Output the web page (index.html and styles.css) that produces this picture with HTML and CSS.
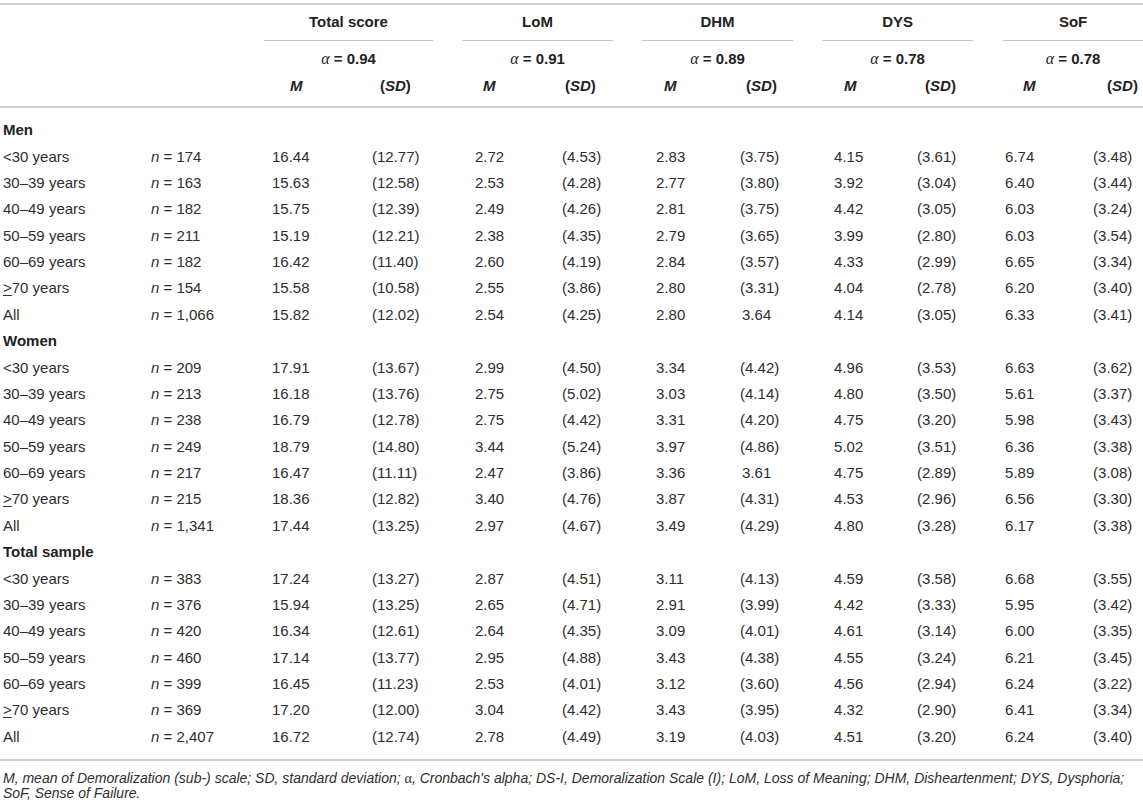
FILE: index.html
```html
<!DOCTYPE html>
<html lang="en">
<head>
<meta charset="utf-8">
<title>Demoralization Scale table</title>
<link rel="stylesheet" href="styles.css">
</head>
<body>
<div class="wrap">
<table class="stats">
  <colgroup>
    <col class="c-label"><col class="c-n">
    <col class="c-totm"><col class="c-totsd">
    <col class="c-lomm"><col class="c-lomsd">
    <col class="c-dhmm"><col class="c-dhmsd">
    <col class="c-dysm"><col class="c-dyssd">
    <col class="c-sofm"><col class="c-sofsd">
  </colgroup>
  <thead>
    <tr class="h-group">
      <th colspan="2"></th>
      <th colspan="2"><div class="grp">Total score</div></th>
      <th colspan="2"><div class="grp">LoM</div></th>
      <th colspan="2"><div class="grp">DHM</div></th>
      <th colspan="2"><div class="grp">DYS</div></th>
      <th colspan="2"><div class="grp">SoF</div></th>
    </tr>
    <tr class="h-alpha">
      <th colspan="2"></th>
      <th colspan="2"><div class="grp"><span class="al">α</span> = 0.94</div></th>
      <th colspan="2"><div class="grp"><span class="al">α</span> = 0.91</div></th>
      <th colspan="2"><div class="grp"><span class="al">α</span> = 0.89</div></th>
      <th colspan="2"><div class="grp"><span class="al">α</span> = 0.78</div></th>
      <th colspan="2"><div class="grp"><span class="al">α</span> = 0.78</div></th>
    </tr>
    <tr class="h-ms">
      <th></th><th></th>
      <th><i>M</i></th><th>(<i>SD</i>)</th>
      <th><i>M</i></th><th>(<i>SD</i>)</th>
      <th><i>M</i></th><th>(<i>SD</i>)</th>
      <th><i>M</i></th><th>(<i>SD</i>)</th>
      <th><i>M</i></th><th>(<i>SD</i>)</th>
    </tr>
  </thead>
  <tbody>
    <tr class="sec first"><td colspan="12">Men</td></tr>
    <tr><td>&lt;30 years</td><td><i>n</i> = 174</td><td>16.44</td><td>(12.77)</td><td>2.72</td><td>(4.53)</td><td>2.83</td><td>(3.75)</td><td>4.15</td><td>(3.61)</td><td>6.74</td><td>(3.48)</td></tr>
    <tr><td>30–39 years</td><td><i>n</i> = 163</td><td>15.63</td><td>(12.58)</td><td>2.53</td><td>(4.28)</td><td>2.77</td><td>(3.80)</td><td>3.92</td><td>(3.04)</td><td>6.40</td><td>(3.44)</td></tr>
    <tr><td>40–49 years</td><td><i>n</i> = 182</td><td>15.75</td><td>(12.39)</td><td>2.49</td><td>(4.26)</td><td>2.81</td><td>(3.75)</td><td>4.42</td><td>(3.05)</td><td>6.03</td><td>(3.24)</td></tr>
    <tr><td>50–59 years</td><td><i>n</i> = 211</td><td>15.19</td><td>(12.21)</td><td>2.38</td><td>(4.35)</td><td>2.79</td><td>(3.65)</td><td>3.99</td><td>(2.80)</td><td>6.03</td><td>(3.54)</td></tr>
    <tr><td>60–69 years</td><td><i>n</i> = 182</td><td>16.42</td><td>(11.40)</td><td>2.60</td><td>(4.19)</td><td>2.84</td><td>(3.57)</td><td>4.33</td><td>(2.99)</td><td>6.65</td><td>(3.34)</td></tr>
    <tr><td><u>&gt;</u>70 years</td><td><i>n</i> = 154</td><td>15.58</td><td>(10.58)</td><td>2.55</td><td>(3.86)</td><td>2.80</td><td>(3.31)</td><td>4.04</td><td>(2.78)</td><td>6.20</td><td>(3.40)</td></tr>
    <tr><td>All</td><td><i>n</i> = 1,066</td><td>15.82</td><td>(12.02)</td><td>2.54</td><td>(4.25)</td><td>2.80</td><td class="nop">3.64</td><td>4.14</td><td>(3.05)</td><td>6.33</td><td>(3.41)</td></tr>
    <tr class="sec"><td colspan="12">Women</td></tr>
    <tr><td>&lt;30 years</td><td><i>n</i> = 209</td><td>17.91</td><td>(13.67)</td><td>2.99</td><td>(4.50)</td><td>3.34</td><td>(4.42)</td><td>4.96</td><td>(3.53)</td><td>6.63</td><td>(3.62)</td></tr>
    <tr><td>30–39 years</td><td><i>n</i> = 213</td><td>16.18</td><td>(13.76)</td><td>2.75</td><td>(5.02)</td><td>3.03</td><td>(4.14)</td><td>4.80</td><td>(3.50)</td><td>5.61</td><td>(3.37)</td></tr>
    <tr><td>40–49 years</td><td><i>n</i> = 238</td><td>16.79</td><td>(12.78)</td><td>2.75</td><td>(4.42)</td><td>3.31</td><td>(4.20)</td><td>4.75</td><td>(3.20)</td><td>5.98</td><td>(3.43)</td></tr>
    <tr><td>50–59 years</td><td><i>n</i> = 249</td><td>18.79</td><td>(14.80)</td><td>3.44</td><td>(5.24)</td><td>3.97</td><td>(4.86)</td><td>5.02</td><td>(3.51)</td><td>6.36</td><td>(3.38)</td></tr>
    <tr><td>60–69 years</td><td><i>n</i> = 217</td><td>16.47</td><td>(11.11)</td><td>2.47</td><td>(3.86)</td><td>3.36</td><td class="nop">3.61</td><td>4.75</td><td>(2.89)</td><td>5.89</td><td>(3.08)</td></tr>
    <tr><td><u>&gt;</u>70 years</td><td><i>n</i> = 215</td><td>18.36</td><td>(12.82)</td><td>3.40</td><td>(4.76)</td><td>3.87</td><td>(4.31)</td><td>4.53</td><td>(2.96)</td><td>6.56</td><td>(3.30)</td></tr>
    <tr><td>All</td><td><i>n</i> = 1,341</td><td>17.44</td><td>(13.25)</td><td>2.97</td><td>(4.67)</td><td>3.49</td><td>(4.29)</td><td>4.80</td><td>(3.28)</td><td>6.17</td><td>(3.38)</td></tr>
    <tr class="sec"><td colspan="12">Total sample</td></tr>
    <tr><td>&lt;30 years</td><td><i>n</i> = 383</td><td>17.24</td><td>(13.27)</td><td>2.87</td><td>(4.51)</td><td>3.11</td><td>(4.13)</td><td>4.59</td><td>(3.58)</td><td>6.68</td><td>(3.55)</td></tr>
    <tr><td>30–39 years</td><td><i>n</i> = 376</td><td>15.94</td><td>(13.25)</td><td>2.65</td><td>(4.71)</td><td>2.91</td><td>(3.99)</td><td>4.42</td><td>(3.33)</td><td>5.95</td><td>(3.42)</td></tr>
    <tr><td>40–49 years</td><td><i>n</i> = 420</td><td>16.34</td><td>(12.61)</td><td>2.64</td><td>(4.35)</td><td>3.09</td><td>(4.01)</td><td>4.61</td><td>(3.14)</td><td>6.00</td><td>(3.35)</td></tr>
    <tr><td>50–59 years</td><td><i>n</i> = 460</td><td>17.14</td><td>(13.77)</td><td>2.95</td><td>(4.88)</td><td>3.43</td><td>(4.38)</td><td>4.55</td><td>(3.24)</td><td>6.21</td><td>(3.45)</td></tr>
    <tr><td>60–69 years</td><td><i>n</i> = 399</td><td>16.45</td><td>(11.23)</td><td>2.53</td><td>(4.01)</td><td>3.12</td><td>(3.60)</td><td>4.56</td><td>(2.94)</td><td>6.24</td><td>(3.22)</td></tr>
    <tr><td><u>&gt;</u>70 years</td><td><i>n</i> = 369</td><td>17.20</td><td>(12.00)</td><td>3.04</td><td>(4.42)</td><td>3.43</td><td>(3.95)</td><td>4.32</td><td>(2.90)</td><td>6.41</td><td>(3.34)</td></tr>
    <tr class="last"><td>All</td><td><i>n</i> = 2,407</td><td>16.72</td><td>(12.74)</td><td>2.78</td><td>(4.49)</td><td>3.19</td><td>(4.03)</td><td>4.51</td><td>(3.20)</td><td>6.24</td><td>(3.40)</td></tr>
  </tbody>
</table>
<p class="note"><i>M</i>, mean of Demoralization (sub-) scale; <i>SD</i>, standard deviation; <span class="al-note">α</span>, Cronbach's alpha; <i>DS-I</i>, Demoralization Scale (I); <i>LoM</i>, Loss of Meaning; <i>DHM</i>, Disheartenment; <i>DYS</i>, Dysphoria; <i>SoF</i>, Sense of Failure.</p>
</div>
</body>
</html>
```
FILE: styles.css
```css
html, body {
  margin: 0;
  padding: 0;
  background: #ffffff;
}

body {
  font-family: "Liberation Sans", Arial, sans-serif;
  color: #2e2e2e;
  width: 1143px;
  overflow: hidden;
}

.wrap {
  padding-top: 3px;
}

.stats {
  width: 1143px;
  table-layout: fixed;
  border-collapse: collapse;
  border-spacing: 0;
  border-top: 2px solid #cfcfcf;
  border-bottom: 2px solid #cfcfcf;
  font-size: 15px;
}

.c-label { width: 141px; }
.c-n { width: 121px; }
.c-totm { width: 100px; }
.c-totsd { width: 103px; }
.c-lomm { width: 87px; }
.c-lomsd { width: 94px; }
.c-dhmm { width: 84px; }
.c-dhmsd { width: 94px; }
.c-dysm { width: 83px; }
.c-dyssd { width: 88px; }
.c-sofm { width: 88px; }
.c-sofsd { width: 60px; }

.stats th {
  font-weight: bold;
  color: #222;
  line-height: 18px;
  padding: 0;
  text-align: center;
  white-space: nowrap;
}

.grp {
  text-align: center;
}

.h-group .grp {
  padding: 8px 0 9px;
  border-bottom: 1px solid #c4c4c4;
}

.h-group th:nth-child(2) .grp { margin: 0 32px 0 2px; }
.h-group th:nth-child(3) .grp { margin: 0 33px 0 -3px; }
.h-group th:nth-child(4) .grp { margin: 0 31px 0 -4px; }
.h-group th:nth-child(5) .grp { margin: 0 22px 0 -2px; }
.h-group th:nth-child(6) .grp { margin: 0 0 0 8px; }

.h-alpha .grp {
  padding: 9px 0 0;
}

.h-alpha th:nth-child(2) .grp { margin: 0 32px 0 2px; }
.h-alpha th:nth-child(3) .grp { margin: 0 33px 0 -3px; }
.h-alpha th:nth-child(4) .grp { margin: 0 31px 0 -4px; }
.h-alpha th:nth-child(5) .grp { margin: 0 22px 0 -2px; }
.h-alpha th:nth-child(6) .grp { margin: 0 0 0 8px; }

.al {
  font-family: "Liberation Serif", "Times New Roman", serif;
  font-style: italic;
  font-weight: normal;
  font-size: 16px;
}

.h-ms th {
  text-align: left;
  padding-top: 9px;
  padding-bottom: 11px;
  border-bottom: 2px solid #cfcfcf;
}

.h-ms th:nth-child(3) { padding-left: 28px; }
.h-ms th:nth-child(4) { padding-left: 18px; }
.h-ms th:nth-child(5) { padding-left: 18px; }
.h-ms th:nth-child(6) { padding-left: 13px; }
.h-ms th:nth-child(7) { padding-left: 18px; }
.h-ms th:nth-child(8) { padding-left: 16px; }
.h-ms th:nth-child(9) { padding-left: 20px; }
.h-ms th:nth-child(10) { padding-left: 18px; }
.h-ms th:nth-child(11) { padding-left: 28px; }
.h-ms th:nth-child(12) { padding-left: 24px; }

.stats td {
  line-height: 18px;
  padding: 4.2px 0 4.2px 10px;
  text-align: left;
  white-space: nowrap;
}

.stats td:first-child {
  padding-left: 3px;
}

.stats td.nop {
  padding-left: 12px;
}

.sec td {
  font-weight: bold;
  color: #222;
}

.first td {
  padding-top: 13.2px;
}

.last td {
  padding-bottom: 13.2px;
}

.stats u {
  text-decoration: underline;
  text-underline-offset: 2px;
}

.note {
  margin: 10px 0 0;
  padding: 0 3px;
  font-size: 14px;
  line-height: 14px;
  font-style: italic;
  color: #2e2e2e;
}

.al-note {
  font-family: "Liberation Serif", "Times New Roman", serif;
  font-style: normal;
}
```
